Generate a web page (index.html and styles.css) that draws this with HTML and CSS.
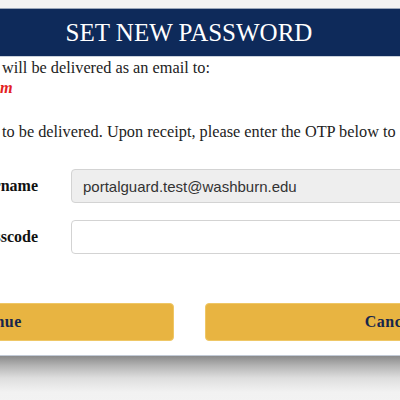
FILE: index.html
```html
<!DOCTYPE html>
<html lang="en">
<head>
<meta charset="utf-8">
<title>Set New Password</title>
<link rel="stylesheet" href="styles.css">
</head>
<body>
<div class="page">
  <div class="dialog">
    <div class="dialog-header">SET NEW PASSWORD</div>
    <div class="dialog-body">
      <div class="message">
        <p class="msg-line">will be delivered as an email to:</p>
        <p class="msg-email">m</p>
        <p class="msg-note">to be delivered. Upon receipt, please enter the OTP below to</p>
      </div>
      <div class="form">
        <label class="form-label" for="user">Username</label>
        <input class="form-input is-readonly" id="user" type="text" value="portalguard.test@washburn.edu" readonly>
        <label class="form-label" for="code">Passcode</label>
        <input class="form-input" id="code" type="text" value="">
      </div>
      <div class="actions">
        <button class="btn" type="button">Continue</button>
        <button class="btn" type="button">Cancel</button>
      </div>
    </div>
  </div>
  <div class="backdrop-shade"></div>
</div>
</body>
</html>
```
FILE: styles.css
```css
html, body {
  margin: 0;
  padding: 0;
}
body {
  width: 400px;
  height: 400px;
  overflow: hidden;
  background: #f2f2f2;
  font-family: "Liberation Serif", "Times New Roman", serif;
  color: #222;
}
.page {
  display: flex;
  flex-direction: column;
  padding-top: 8px;
}
.dialog {
  width: 818px;
  margin-left: -220px;
  flex: none;
  background: #fff;
  border-top: 1px solid #9aa6b9;
  border-bottom: 1px solid #c2cad6;
}
.dialog-header {
  height: 47px;
  line-height: 47px;
  background: #0e2a5a;
  color: #fff;
  text-align: center;
  font-size: 25px;
  border-bottom: 1px solid #c9d1dc;
}
.dialog-body {
  padding: 1px 23px 14px;
}
.message {
  margin-left: 199px;
}
.message p {
  margin: 0;
  font-size: 16.3px;
  line-height: 20px;
  white-space: nowrap;
}
.msg-email {
  margin-left: -2px !important;
  color: #e3211f;
  font-style: italic;
  font-weight: bold;
}
.msg-note {
  margin-top: 24px !important;
}
.form {
  display: grid;
  grid-template-columns: 235px 1fr;
  column-gap: 33px;
  row-gap: 17px;
  align-items: center;
  margin-top: 27px;
}
.form-label {
  text-align: right;
  font-weight: bold;
  font-size: 16px;
  color: #111;
}
.form-input {
  box-sizing: border-box;
  height: 34px;
  width: 100%;
  margin: 0;
  padding: 0 11px;
  border: 1px solid #d3d3d3;
  border-radius: 4px;
  background: #fff;
  font-family: "Liberation Sans", Arial, sans-serif;
  font-size: 15px;
  color: #333;
  outline: none;
}
.form-input.is-readonly {
  background: #eeeeee;
}
.actions {
  display: grid;
  grid-template-columns: 1fr 1fr;
  column-gap: 31px;
  margin-top: 49px;
}
.btn {
  height: 38px;
  margin: 0;
  border: 1px solid #efc766;
  border-radius: 4px;
  background: #e8b441;
  color: #16264c;
  font-family: "Liberation Serif", "Times New Roman", serif;
  font-weight: bold;
  font-size: 16px;
  letter-spacing: 0.5px;
}
.backdrop-shade {
  height: 60px;
  background: linear-gradient(#8a8a8a 0px, #b5b5b5 10px, #dedede 22px, #f2f2f2 36px, #f4f4f4 60px);
}
```
